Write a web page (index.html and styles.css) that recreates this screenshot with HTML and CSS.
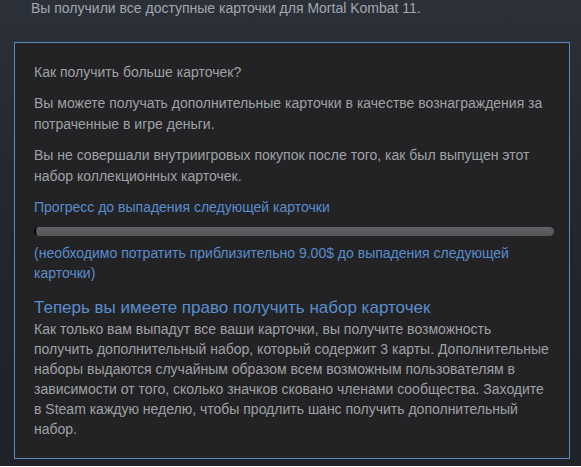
FILE: index.html
```html
<!doctype html>
<html>
  <head>
    <link rel="stylesheet" href="styles.css">
  </head>
  <body>
    <div id="page">
      <div class="owned-note">Вы получили все доступные карточки для Mortal Kombat 11.</div>
      <div class="drop-box">
        <p class="drop-text">Как получить больше карточек?</p>
        <p class="drop-text">Вы можете получать дополнительные карточки в качестве вознаграждения за потраченные в игре деньги.</p>
        <p class="drop-text">Вы не совершали внутриигровых покупок после того, как был выпущен этот набор коллекционных карточек.</p>
        <div class="progress-label">Прогресс до выпадения следующей карточки</div>
        <div class="progress-track">
          <div class="progress-fill" style="width: 0%"></div>
        </div>
        <div class="progress-note">(необходимо потратить приблизительно 9.00$ до выпадения следующей карточки)</div>
        <div class="booster-title">Теперь вы имеете право получить набор карточек</div>
        <div class="booster-text">Как только вам выпадут все ваши карточки, вы получите возможность получить дополнительный набор, который содержит 3 карты. Дополнительные наборы выдаются случайным образом всем возможным пользователям в зависимости от того, сколько значков сковано членами сообщества. Заходите в Steam каждую неделю, чтобы продлить шанс получить дополнительный набор.</div>
      </div>
    </div>
  </body>
</html>
```

FILE: styles.css
```css
body {
  margin: 0;
  overflow: hidden;
  font-family: "Liberation Sans", Arial, sans-serif;
}

#page {
  width: 581px;
  height: 467px;
  background: linear-gradient(to bottom, #2b3039 0%, #22262e 50%, #1e2127 100%);
  box-sizing: border-box;
}

.owned-note {
  color: #a3a7ad;
  font-size: 14px;
  line-height: 18px;
  padding-left: 31px;
  margin-top: -1px;
}

.drop-box {
  margin: 25px 0 0 14px;
  width: 556px;
  height: 417px;
  box-sizing: border-box;
  border: 1px solid #5b89bd;
  background: #232326;
  padding: 19px 19px 0 19px;
}

.drop-text {
  color: #9fa1a4;
  font-size: 14px;
  line-height: 21px;
  margin: 0 0 10px 0;
}

.progress-label {
  color: #5a8dcc;
  font-size: 14px;
  line-height: 21px;
}

.progress-track {
  height: 9px;
  margin-top: 9px;
  width: 518px;
  border-radius: 5px;
  background: linear-gradient(to bottom, #626266, #555558);
  overflow: hidden;
  border-left: 2px solid #000;
}

.progress-fill {
  height: 100%;
  background: #5a8dcc;
}

.progress-note {
  color: #5a8dcc;
  font-size: 14px;
  line-height: 20px;
  margin-top: 7px;
}

.booster-title {
  color: #5a8dcc;
  font-size: 17px;
  line-height: 22px;
  margin-top: 14px;
}

.booster-text {
  color: #9fa1a4;
  font-size: 14px;
  line-height: 20px;
}
```
